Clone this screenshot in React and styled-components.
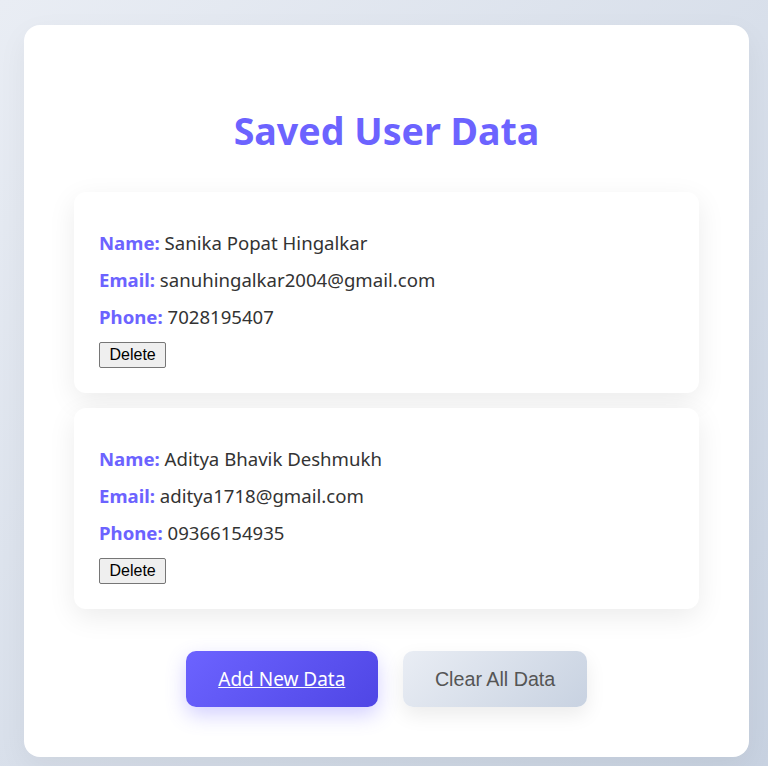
import React, { useState } from 'react'
import styled, { createGlobalStyle } from 'styled-components'

const GlobalStyle = createGlobalStyle`
	html, body {
		margin: 0;
		padding: 0;
	}
	body {
		font-family: 'Noto Sans', 'Open Sans', sans-serif;
		color: #333;
	}
`

const initialUsers = [
	{ name: 'Sanika Popat Hingalkar', email: 'sanuhingalkar2004@gmail.com', phone: '7028195407' },
	{ name: 'Aditya Bhavik Deshmukh', email: 'aditya1718@gmail.com', phone: '09366154935' },
]

const App = () => {
	const [users, setUsers] = useState(initialUsers)

	const removeUser = (index) => {
		setUsers(users.filter((_, i) => i !== index))
	}

	return (
		<Page>
			<GlobalStyle />
			<Card>
				<Title>Saved User Data</Title>
				<List>
					{users.map((user, index) => (
						<UserCard key={user.email}>
							<Field>
								<Label>Name:</Label> {user.name}
							</Field>
							<Field>
								<Label>Email:</Label> {user.email}
							</Field>
							<Field>
								<Label>Phone:</Label> {user.phone}
							</Field>
							<DeleteButton onClick={() => removeUser(index)}>Delete</DeleteButton>
						</UserCard>
					))}
				</List>
				<Actions>
					<AddLink href='#'>Add New Data</AddLink>
					<ClearButton onClick={() => setUsers([])}>Clear All Data</ClearButton>
				</Actions>
			</Card>
		</Page>
	)
}

const Page = styled.div`
	min-height: 100vh;
	box-sizing: border-box;
	padding: 25px 19px 9px 24px;
	background: linear-gradient(135deg, #e9edf4 0%, #c8d2e1 100%);
`

const Card = styled.div`
	background: #fff;
	border-radius: 16px;
	padding: 50px;
	box-shadow: 0 10px 30px rgba(0, 0, 0, 0.05);
`

const Title = styled.h2`
	margin: 30px 0 36px;
	text-align: center;
	font-size: 37.6px;
	font-weight: 700;
	color: #6c63ff;
`

const List = styled.div`
	display: flex;
	flex-direction: column;
	gap: 15px;
`

const UserCard = styled.div`
	background: #fff;
	border-radius: 12px;
	padding: 27px 25px 25px;
	box-shadow: 0 8px 28px rgba(0, 0, 0, 0.08);
`

const Field = styled.p`
	margin: 10px 0;
	font-size: 18.6px;
	line-height: 27px;
	color: #333;
`

const Label = styled.strong`
	color: #6c63ff;
`

const DeleteButton = styled.button`
	display: block;
	box-sizing: border-box;
	height: 26px;
	margin-top: 12px;
	font-family: 'Liberation Sans', Arial, sans-serif;
	font-size: 16px;
	padding: 0 9.5px;
	color: #000;
	background: #efefef;
	border: 1px solid #767676;
	border-radius: 2px;
`

const Actions = styled.div`
	display: flex;
	justify-content: center;
	gap: 25px;
	margin-top: 42px;
`

const AddLink = styled.a`
	display: inline-block;
	padding: 16px 32.5px;
	font-size: 19px;
	line-height: 24px;
	color: #fff;
	border-radius: 10px;
	background: linear-gradient(135deg, #6c63ff 0%, #4f46e5 100%);
	box-shadow: 0 8px 20px rgba(108, 99, 255, 0.3);
`

const ClearButton = styled.button`
	padding: 16px 32px;
	font-family: 'Liberation Sans', Arial, sans-serif;
	font-size: 19.7px;
	line-height: 24px;
	color: #555;
	border: none;
	border-radius: 10px;
	background: linear-gradient(135deg, #e9edf4 0%, #c8d2e1 100%);
	box-shadow: 0 8px 20px rgba(0, 0, 0, 0.08);
`

export default App
